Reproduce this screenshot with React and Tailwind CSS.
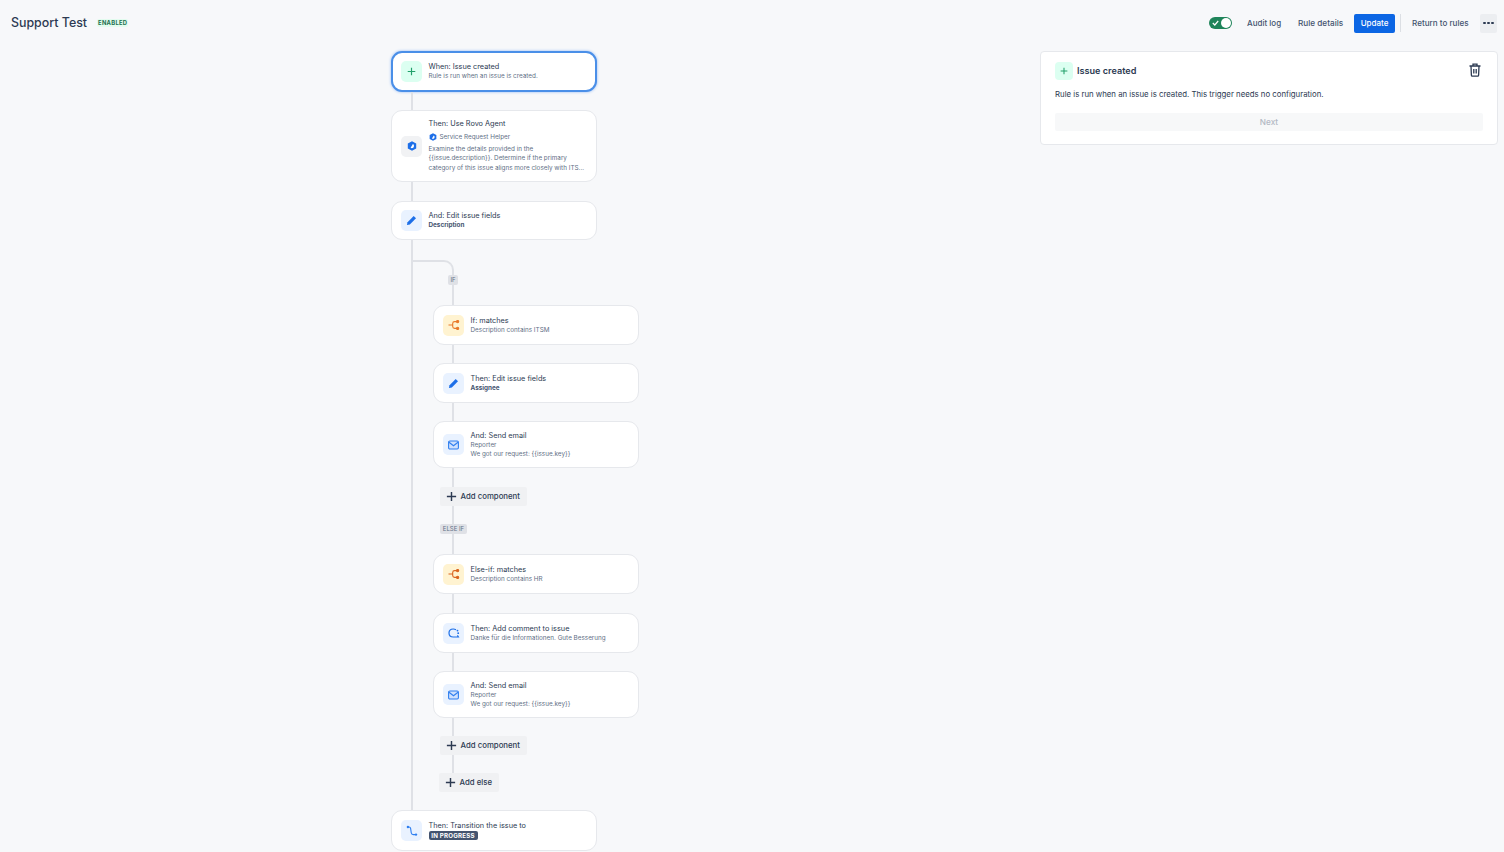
import React from "react";

const Plus = ({ className = "", size = 10 }) => (
  <svg width={size} height={size} viewBox="0 0 10 10" className={className} fill="none" stroke="currentColor" strokeWidth="1.3">
    <path d="M5 .8v8.4M.8 5h8.4" />
  </svg>
);
const Pencil = () => (
  <svg width="11" height="11" viewBox="0 0 12 12" className="text-[#1d6fe8]" fill="currentColor">
    <path d="M8.4 1.1 10.9 3.6 4.2 10.3 1 11l.7-3.2z" />
  </svg>
);
const Branch = ({ dark }) => (
  <svg width="12" height="10" viewBox="0 0 12 10" fill="none" className={dark ? "text-[#d9631e]" : "text-[#e8782a]"} stroke="currentColor" strokeWidth="1.1">
    <path d="M.5 5h4.2M9 1.6H6.6Q4.7 1.6 4.7 3.4v3.2q0 1.8 1.9 1.8H9" />
    <circle cx="9.6" cy="1.6" r="1.1" fill="currentColor" />
    <circle cx="9.6" cy="8.4" r="1.1" fill="currentColor" />
  </svg>
);
const Mail = () => (
  <svg width="11" height="10" viewBox="0 0 11 10" fill="#cfe1fd" stroke="#2f7ff0" strokeWidth="1.1">
    <rect x=".6" y="1" width="9.8" height="8" rx="1.2" />
    <path d="M1 2.2 5.5 5.8 10 2.2" fill="none" />
  </svg>
);
const Comment = () => (
  <svg width="12" height="11" viewBox="0 0 12 11" fill="none" stroke="#1d6fe8" strokeWidth="1.2">
    <path d="M8 1.7Q6.8 1 5.2 1 1 1 1 5t4.2 4h5.2L9.4 7.4" />
    <circle cx="9.5" cy="2.6" r=".9" fill="#1d6fe8" stroke="none" />
    <circle cx="10.2" cy="5.2" r=".9" fill="#1d6fe8" stroke="none" />
  </svg>
);
const Transition = () => (
  <svg width="12" height="12" viewBox="0 0 12 12" fill="none" stroke="#2f7ff0" strokeWidth="1.1">
    <path d="M2 2h1q1.4 0 1.6 1.4l.7 4.6q.2 1.6 2 1.6H9" />
    <circle cx="1.9" cy="2" r="1.2" fill="#2f7ff0" stroke="none" />
    <circle cx="10" cy="9.6" r="1.2" fill="#2f7ff0" stroke="none" />
  </svg>
);
const Rovo = ({ size = 9 }) => (
  <svg width={size} height={size} viewBox="0 0 10 10">
    <path d="M5 .2 9.2 2.6v4.8L5 9.8.8 7.4V2.6z" fill="#1d6fe8" />
    <path d="M3.6 6.8 5.9 3c1.2.5 1.4 2.5.6 3.5-.8.8-2.1.9-2.9.3Z" fill="#fff" />
  </svg>
);

const Rail = ({ h, top }) => (
  <div className={`w-0.5 bg-[#dfe1e6] ${top ? "ml-5" : "ml-[19px]"}`} style={{ height: h }} />
);

const Tile = ({ tone, children }) => {
  const tones = {
    green: "bg-[#dcfff1]",
    gray: "bg-[#f1f2f4]",
    blue: "bg-[#e9f2ff]",
    amber: "bg-[#fff3d1]",
  };
  return <div className={`flex h-[21px] w-[21px] shrink-0 items-center justify-center rounded-[5px] ${tones[tone]}`}>{children}</div>;
};

const Card = ({ tone, icon, title, children, selected, h }) => (
  <div
    className={`flex w-[206px] items-center gap-[6.5px] rounded-[11px] bg-white pr-2 ${
      selected
        ? "border-2 border-[#4a8fe8] pl-[8px] shadow-[0_0_3px_#8fb8f5]"
        : "border border-[#e6e8ec] pl-[9px]"
    }`}
    style={{ height: h }}
  >
    <Tile tone={tone}>{icon}</Tile>
    <div className="min-w-0 flex-1">
      <div className="text-[7.3px] leading-[10px] text-[#2c3a52]">{title}</div>
      {children}
    </div>
  </div>
);

const Sub = ({ children }) => <div className="text-[6.35px] leading-[9px] text-[#626f86]">{children}</div>;
const Bold = ({ children }) => <div className="text-[6.35px] font-bold leading-[9px] text-[#44546f]">{children}</div>;

const AddBtn = ({ label, className = "" }) => (
  <div className={`flex h-[19px] items-center gap-[3.5px] whitespace-nowrap rounded-[2px] bg-[#f0f1f3] pl-[6px] text-[7.8px] font-medium text-[#2c3a52] ${className}`}>
    <Plus size={11} className="text-[#2c3a52]" />
    <span>{label}</span>
  </div>
);

const Tag = ({ children, className = "" }) => (
  <div className={`flex h-[10px] items-center justify-center rounded-[2px] bg-[#dfe1e6] text-[6px] leading-none text-[#626f86] ${className}`}>
    {children}
  </div>
);

export default function App() {
  return (
    <div className="h-[852px] w-[1504px] overflow-hidden bg-[#f7f8fa] font-['Inter',sans-serif]">
      <header className="flex h-[46px] items-center pl-[11px] pr-[7px]">
        <h1 className="mt-[1px] text-[12.4px] font-medium text-[#2c3a52]">Support Test</h1>
        <span className="ml-[10px] rounded-[2px] bg-[#e3fcef] px-[1px] text-[5.8px] font-bold tracking-[0.3px] text-[#216e4e]">ENABLED</span>
        <div className="ml-auto flex items-center">
          <div className="flex h-[12px] w-[23px] items-center justify-between rounded-full bg-[#1f845a] pl-[3px] pr-[1px]">
            <svg width="7" height="6" viewBox="0 0 7 6" fill="none" stroke="#fff" strokeWidth="1.2"><path d="M.8 3 2.8 5 6.2 1" /></svg>
            <div className="h-[10px] w-[10px] rounded-full bg-white" />
          </div>
          <span className="ml-[15px] w-[33px] whitespace-nowrap text-[8px] font-medium text-[#44546f]">Audit log</span>
          <span className="ml-[18px] w-[45px] whitespace-nowrap text-[8.2px] font-medium text-[#44546f]">Rule details</span>
          <div className="ml-[11px] flex h-[19px] w-[41px] items-center justify-center rounded-[2px] bg-[#0c66e4] text-[8px] font-medium text-white">Update</div>
          <div className="ml-[5px] h-[18px] w-px bg-[#dcdfe4]" />
          <span className="ml-[11px] w-[56px] whitespace-nowrap text-[8.1px] font-medium text-[#44546f]">Return to rules</span>
          <div className="ml-[12px] flex h-[19px] w-[17px] items-center justify-center gap-[1.5px] rounded-[2px] bg-[#eceef1]">
            <i className="h-[2.4px] w-[2.4px] rounded-full bg-[#2c3a52]" />
            <i className="h-[2.4px] w-[2.4px] rounded-full bg-[#2c3a52]" />
            <i className="h-[2.4px] w-[2.4px] rounded-full bg-[#2c3a52]" />
          </div>
        </div>
      </header>

      <div className="flex items-start pl-[391px] pr-[6px] pt-[5px]">
        <main className="w-[206px]">
          <Card selected h={41} tone="green" icon={<Plus size={9} className="text-[#22a06b]" />} title="When: Issue created">
            <Sub>Rule is run when an issue is created.</Sub>
          </Card>
          <Rail top h={18} />
          <Card h={72} tone="gray" icon={<Rovo size={10} />} title="Then: Use Rovo Agent">
            <div className="mt-[4px] flex items-center gap-[3px] text-[6.35px] leading-[9px] text-[#626f86]">
              <Rovo size={8} /> Service Request Helper
            </div>
            <div className="mt-[3px] whitespace-nowrap text-[6.35px] leading-[9.4px] text-[#626f86]">
              Examine the details provided in the<br />
              {"{{issue.description}}"}. Determine if the primary<br />
              category of this issue aligns more closely with ITS...
            </div>
          </Card>
          <Rail top h={19} />
          <Card h={39} tone="blue" icon={<Pencil />} title="And: Edit issue fields">
            <Bold>Description</Bold>
          </Card>

          <section className="ml-5 h-[570px] border-l-2 border-[#dfe1e6] pt-[20px]">
            <div className="h-[15px] w-[41px] rounded-tr-[10px] border-r-2 border-t-2 border-[#dfe1e6]" />
            <div className="ml-5 w-[206px]">
              <Tag className="ml-[15px] w-[10px]">IF</Tag>
              <Rail h={20} />
              <Card h={40} tone="amber" icon={<Branch />} title="If: matches"><Sub>Description contains ITSM</Sub></Card>
              <Rail h={18} />
              <Card h={40} tone="blue" icon={<Pencil />} title="Then: Edit issue fields"><Bold>Assignee</Bold></Card>
              <Rail h={18} />
              <Card h={47} tone="blue" icon={<Mail />} title="And: Send email">
                <Sub>Reporter</Sub>
                <Sub>We got our request: {"{{issue.key}}"}</Sub>
              </Card>
              <Rail h={19} />
              <AddBtn label="Add component" className="ml-[7px] w-[87px]" />
              <Rail h={18} />
              <Tag className="ml-[7px] w-[27px]">ELSE IF</Tag>
              <Rail h={20} />
              <Card h={40} tone="amber" icon={<Branch dark />} title="Else-if: matches"><Sub>Description contains HR</Sub></Card>
              <Rail h={19} />
              <Card h={40} tone="blue" icon={<Comment />} title="Then: Add comment to issue"><Sub>Danke für die Informationen. Gute Besserung</Sub></Card>
              <Rail h={18} />
              <Card h={47} tone="blue" icon={<Mail />} title="And: Send email">
                <Sub>Reporter</Sub>
                <Sub>We got our request: {"{{issue.key}}"}</Sub>
              </Card>
              <Rail h={18} />
              <AddBtn label="Add component" className="ml-[7px] w-[87px]" />
              <Rail h={18} />
              <AddBtn label="Add else" className="ml-[6px] w-[60px]" />
            </div>
          </section>

          <Card h={41} tone="blue" icon={<Transition />} title="Then: Transition the issue to">
            <span className="block w-[49px] rounded-[2px] bg-[#44546f] text-center text-[6.2px] font-bold leading-[9px] tracking-[0.2px] text-white">IN PROGRESS</span>
          </Card>
        </main>

        <aside className="ml-auto w-[458px] rounded-[4px] border border-[#e6e8ec] bg-white px-[14px] pb-[13px] pt-[10px]">
          <div className="flex items-center">
            <div className="flex h-[18px] w-[18px] items-center justify-center rounded-[4px] bg-[#dcfff1]">
              <Plus size={8} className="text-[#22a06b]" />
            </div>
            <span className="ml-[4px] text-[9.1px] font-semibold text-[#2c3a52]">Issue created</span>
            <svg className="ml-auto mr-[2px] -translate-y-[1px]" width="12" height="14" viewBox="0 0 12 14" fill="none" stroke="#2c3a52" strokeWidth="1.3">
              <path d="M.5 3h11M4 3V1.2h4V3M2 3l.4 9.2q0 1 1 1h5.2q1 0 1-1L10 3M4.8 6v4.6M7.2 6v4.6" />
            </svg>
          </div>
          <p className="mt-[9px] text-[7.8px] leading-[11px] text-[#2c3a52]">Rule is run when an issue is created. This trigger needs no configuration.</p>
          <div className="mt-[13px] flex h-[18px] items-center justify-center rounded-[2px] bg-[#f7f8f9] text-[8.2px] font-medium text-[#b3b9c4]">Next</div>
        </aside>
      </div>
    </div>
  );
}
